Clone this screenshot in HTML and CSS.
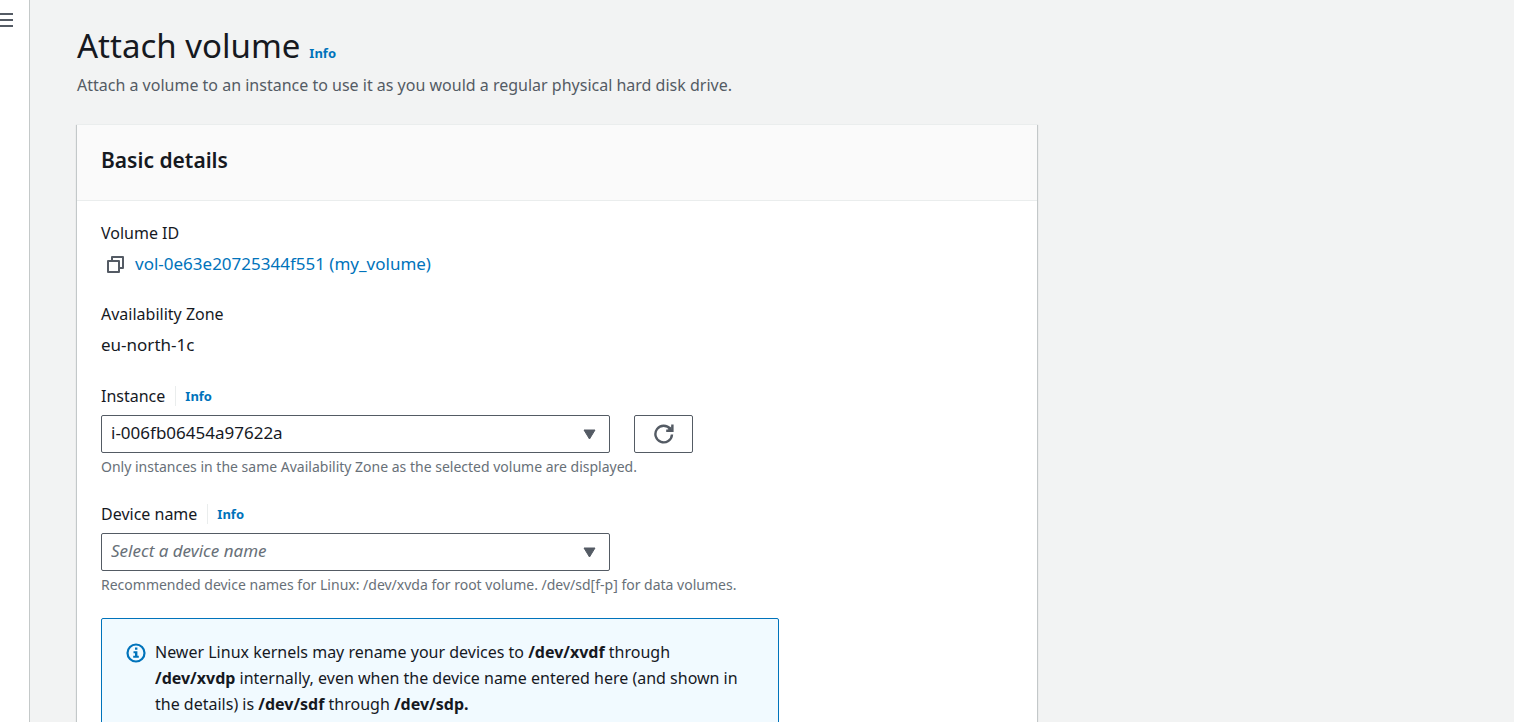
FILE: index.html
```html
<!DOCTYPE html>
<html lang="en">
<head>
<meta charset="utf-8">
<meta name="viewport" content="width=device-width, initial-scale=1">
<title>Attach volume</title>
<link rel="stylesheet" href="styles.css">
</head>
<body>
<div class="app">
  <aside class="rail">
    <button class="rail-toggle" type="button" aria-label="Open navigation">
      <svg width="16" height="16" viewBox="0 0 16 16" aria-hidden="true"><path d="M0 2h16M0 8h16M0 14h16" stroke="#545b64" stroke-width="2"/></svg>
    </button>
  </aside>
  <main class="content">
    <header class="page-header">
      <div class="title-row">
        <h1 class="title">Attach volume</h1>
        <a class="info" href="#">Info</a>
      </div>
      <p class="subtitle">Attach a volume to an instance to use it as you would a regular physical hard disk drive.</p>
    </header>
    <section class="panel">
      <h2 class="panel-title">Basic details</h2>
      <div class="panel-body">
        <div class="field">
          <div class="label">Volume ID</div>
          <div class="value copy-row">
            <button class="copy" type="button" aria-label="Copy volume ID">
              <svg width="19" height="18" viewBox="0 0 19 18" fill="none" stroke="#545b64" stroke-width="2" stroke-linejoin="round" aria-hidden="true"><path d="M2 6h11v11H2zM6 6V2h11v11h-4"/></svg>
            </button>
            <a class="link" href="#">vol-0e63e20725344f551 (my_volume)</a>
          </div>
        </div>
        <div class="field">
          <div class="label">Availability Zone</div>
          <div class="value">eu-north-1c</div>
        </div>
        <div class="field">
          <div class="label-row">
            <label class="label" for="instance">Instance</label>
            <a class="info divided" href="#">Info</a>
          </div>
          <div class="control-row">
            <div class="select-wrap">
              <select class="select" id="instance"><option>i-006fb06454a97622a</option></select>
              <svg class="caret" width="13" height="11" viewBox="0 0 13 11" aria-hidden="true"><path d="M1 1h11L6.500 10z" fill="#545b64" stroke="#545b64" stroke-linejoin="round"/></svg>
            </div>
            <button class="refresh" type="button" aria-label="Refresh instances">
              <svg width="20" height="20" viewBox="0 0 20 20" fill="none" stroke="#545b64" stroke-width="2.400" aria-hidden="true"><path d="M18 10.500A8.300 8.300 0 1 1 16.300 5"/><path d="M18.400 .5v6.200H12.200"/><path d="M17.600 2v4.200H13.400z" fill="#545b64" stroke="none"/></svg>
            </button>
          </div>
          <p class="hint">Only instances in the same Availability Zone as the selected volume are displayed.</p>
        </div>
        <div class="field">
          <div class="label-row">
            <label class="label" for="device">Device name</label>
            <a class="info divided" href="#">Info</a>
          </div>
          <div class="control-row">
            <div class="select-wrap">
              <select class="select placeholder" id="device"><option>Select a device name</option></select>
              <svg class="caret" width="13" height="11" viewBox="0 0 13 11" aria-hidden="true"><path d="M1 1h11L6.500 10z" fill="#545b64" stroke="#545b64" stroke-linejoin="round"/></svg>
            </div>
          </div>
          <p class="hint">Recommended device names for Linux: /dev/xvda for root volume. /dev/sd[f-p] for data volumes.</p>
        </div>
        <div class="alert">
          <svg class="alert-icon" width="20" height="20" viewBox="0 0 20 20" aria-hidden="true"><circle cx="10" cy="10" r="8.500" fill="none" stroke="#0073bb" stroke-width="2.200"/><path d="M9 4.500h2.400v2.300H9zM7.500 8.300h3.900v4.500h1.400v2H7.200v-2h1.800v-2.500H7.500z" fill="#0073bb"/></svg>
          <p class="alert-text">Newer Linux kernels may rename your devices to <strong>/dev/xvdf</strong> through <strong>/dev/xvdp</strong> internally, even when the device name entered here (and shown in the details) is <strong>/dev/sdf</strong> through <strong>/dev/sdp.</strong></p>
        </div>
      </div>
    </section>
  </main>
</div>
</body>
</html>
```
FILE: styles.css
```css
* {
  box-sizing: border-box;
}

body {
  margin: 0;
  background: #f2f3f3;
  color: #16191f;
  font-family: "Noto Sans", "Open Sans", sans-serif;
  font-size: 16px;
  line-height: 26px;
}

h1, h2, p {
  margin: 0;
}

a {
  color: #0073bb;
  text-decoration: none;
}

button {
  padding: 0;
  border: 0;
  background: none;
  cursor: pointer;
}

svg {
  display: block;
}

.app {
  display: flex;
  height: 100vh;
  overflow: hidden;
}

.rail {
  flex: 0 0 30px;
  padding-top: 12px;
  border-right: 1px solid #c4c9c9;
  background: #fff;
  overflow: hidden;
}

.rail-toggle {
  display: block;
  width: 13px;
  overflow: hidden;
}

.content {
  flex: 1;
  min-width: 0;
  padding: 24px 47px 0;
}

.page-header {
  margin-bottom: 26px;
}

.title-row {
  display: flex;
  align-items: baseline;
  gap: 9px;
}

.title {
  font-size: 33px;
  font-weight: 400;
  line-height: 44px;
}

.info {
  font-size: 13px;
  font-weight: 700;
  line-height: 20px;
}

.subtitle {
  margin-top: 4px;
  color: #545b64;
}

.panel {
  max-width: 960px;
  border-top: 1px solid #eaeded;
  background: #fff;
  box-shadow: 0 1px 1px rgba(0, 28, 36, 0.3), 1px 1px 1px rgba(0, 28, 36, 0.15), -1px 1px 1px rgba(0, 28, 36, 0.15);
}

.panel-title {
  padding: 20px 24px 24px;
  border-bottom: 1px solid #eaeded;
  background: #fafafa;
  font-size: 21px;
  font-weight: 600;
  line-height: 31px;
}

.panel-body {
  padding: 19px 24px 24px;
}

.field {
  margin-bottom: 24px;
}

.value {
  margin-top: 5px;
  font-size: 17px;
}

.copy-row {
  display: flex;
  align-items: center;
  gap: 10px;
  padding-left: 5px;
}

.label-row {
  display: flex;
  align-items: center;
  gap: 10px;
  padding-top: 1px;
  margin-bottom: 6px;
}

.divided {
  padding-left: 9px;
  border-left: 1px solid #eaeded;
}

.control-row {
  display: flex;
  gap: 24px;
}

.select-wrap {
  position: relative;
  flex: 0 1 509px;
}

.select {
  display: block;
  width: 100%;
  height: 38px;
  padding: 0 36px 2px 9px;
  border: 1px solid #545b64;
  border-radius: 2px;
  appearance: none;
  background: #fff;
  color: #16191f;
  font: inherit;
  font-size: 17px;
}

.placeholder {
  color: #687078;
  font-style: italic;
}

.caret {
  position: absolute;
  top: 14px;
  right: 14px;
  pointer-events: none;
}

.refresh {
  display: flex;
  align-items: center;
  justify-content: center;
  width: 59px;
  height: 38px;
  border: 1px solid #545b64;
  border-radius: 2px;
  background: #fff;
}

.hint {
  margin-top: 5px;
  color: #687078;
  font-size: 14px;
  line-height: 18px;
}

.alert {
  display: flex;
  gap: 9px;
  max-width: 678px;
  padding: 20px 24px;
  border: 1px solid #0073bb;
  border-radius: 2px;
  background: #f1faff;
}

.alert-icon {
  flex: none;
  margin-top: 4px;
}
```
